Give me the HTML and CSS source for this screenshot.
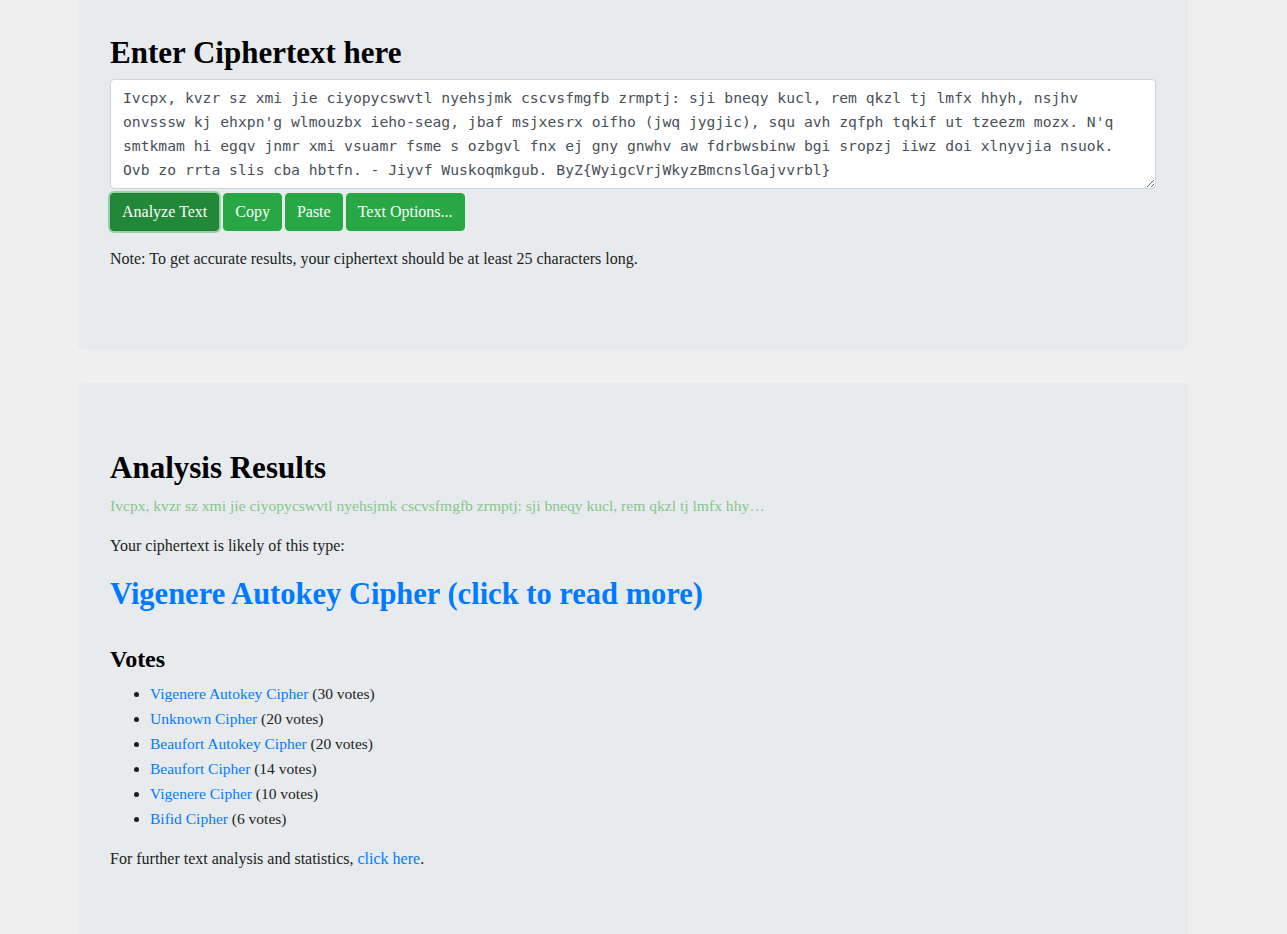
FILE: index.html
```html
<!DOCTYPE html>
<html lang="en">
<head>
<meta charset="utf-8">
<title>Cipher Identifier</title>
<link rel="stylesheet" href="styles.css">
</head>
<body>
<div class="page">
  <section class="panel panel-input">
    <h1 class="title">Enter Ciphertext here</h1>
    <textarea class="cipher-input" rows="4" spellcheck="false">Ivcpx, kvzr sz xmi jie ciyopycswvtl nyehsjmk cscvsfmgfb zrmptj: sji bneqy kucl, rem qkzl tj lmfx hhyh, nsjhv onvsssw kj ehxpn'g wlmouzbx ieho-seag, jbaf msjxesrx oifho (jwq jygjic), squ avh zqfph tqkif ut tzeezm mozx. N'q smtkmam hi egqv jnmr xmi vsuamr fsme s ozbgvl fnx ej gny gnwhv aw fdrbwsbinw bgi sropzj iiwz doi xlnyvjia nsuok. Ovb zo rrta slis cba hbtfn. - Jiyvf Wuskoqmkgub. ByZ{WyigcVrjWkyzBmcnslGajvvrbl}</textarea>
    <div class="btn-row">
      <button class="btn btn-focus">Analyze Text</button>
      <button class="btn">Copy</button>
      <button class="btn">Paste</button>
      <button class="btn">Text Options...</button>
    </div>
    <p class="note">Note: To get accurate results, your ciphertext should be at least 25 characters long.</p>
  </section>

  <section class="panel panel-results">
    <h1 class="title">Analysis Results</h1>
    <p class="preview">Ivcpx, kvzr sz xmi jie ciyopycswvtl nyehsjmk cscvsfmgfb zrmptj: sji bneqy kucl, rem qkzl tj lmfx hhy…</p>
    <p class="text">Your ciphertext is likely of this type:</p>
    <h2 class="result"><a href="#">Vigenere Autokey Cipher (click to read more)</a></h2>
    <h3 class="votes-title">Votes</h3>
    <ul class="votes">
      <li><a href="#">Vigenere Autokey Cipher</a> (30 votes)</li>
      <li><a href="#">Unknown Cipher</a> (20 votes)</li>
      <li><a href="#">Beaufort Autokey Cipher</a> (20 votes)</li>
      <li><a href="#">Beaufort Cipher</a> (14 votes)</li>
      <li><a href="#">Vigenere Cipher</a> (10 votes)</li>
      <li><a href="#">Bifid Cipher</a> (6 votes)</li>
    </ul>
    <p class="text">For further text analysis and statistics, <a href="#">click here</a>.</p>
  </section>
</div>
</body>
</html>
```

FILE: styles.css
```css
html, body {
  margin: 0;
  padding: 0;
}

body {
  background: #efefef;
  font-family: "Liberation Serif", "DejaVu Serif", serif;
  font-size: 16px;
  line-height: 24px;
  color: #1b1e21;
}

.page {
  width: 1110px;
  margin: 0 0 0 78px;
}

.panel {
  background: #e8ebee;
  border-radius: 0 0 5px 5px;
  padding: 34px 32px 63px;
}

.panel-results {
  margin-top: 33px;
  border-radius: 5px 5px 0 0;
  padding-top: 66px;
  padding-bottom: 64px;
}

.title {
  margin: 0 0 7px;
  font-size: 31px;
  line-height: 38px;
  font-weight: bold;
  color: #000;
}

.cipher-input {
  display: block;
  box-sizing: border-box;
  width: 100%;
  height: 110px;
  margin: 0;
  padding: 6px 30px 6px 12px;
  border: 1px solid #ced4da;
  border-radius: 4px;
  background: #fff;
  color: #495057;
  font-family: "DejaVu Sans Mono", "Liberation Mono", monospace;
  font-size: 14.7px;
  line-height: 24px;
  resize: both;
  overflow: hidden;
}

.btn-row {
  display: flex;
  gap: 3px;
  margin-top: 4px;
}

.btn {
  font-family: inherit;
  font-size: 16px;
  line-height: 24px;
  padding: 6px 11px;
  color: #fff;
  background: #28a745;
  border: 1px solid #28a745;
  border-radius: 4px;
  cursor: pointer;
}

.btn-focus {
  background: #218838;
  border-color: #1e7e34;
  box-shadow: 0 0 0 2px rgba(72, 180, 97, 0.5);
  margin-right: 1px;
}

.note {
  margin: 16px 0 16px;
}

.preview {
  margin: 0 0 16px;
  font-size: 15.6px;
  color: #86c68b;
}

.text {
  margin: 0 0 16px;
}

a {
  color: #007bff;
  text-decoration: none;
}

.result {
  margin: 17px 0 32px;
  font-size: 30.5px;
  line-height: 38px;
  font-weight: bold;
}

.votes-title {
  margin: 0 0 7px;
  font-size: 24px;
  line-height: 29px;
  font-weight: bold;
  color: #000;
}

.votes {
  margin: 0 0 16px;
  padding-left: 40px;
  line-height: 25px;
  font-size: 15.5px;
}
```
